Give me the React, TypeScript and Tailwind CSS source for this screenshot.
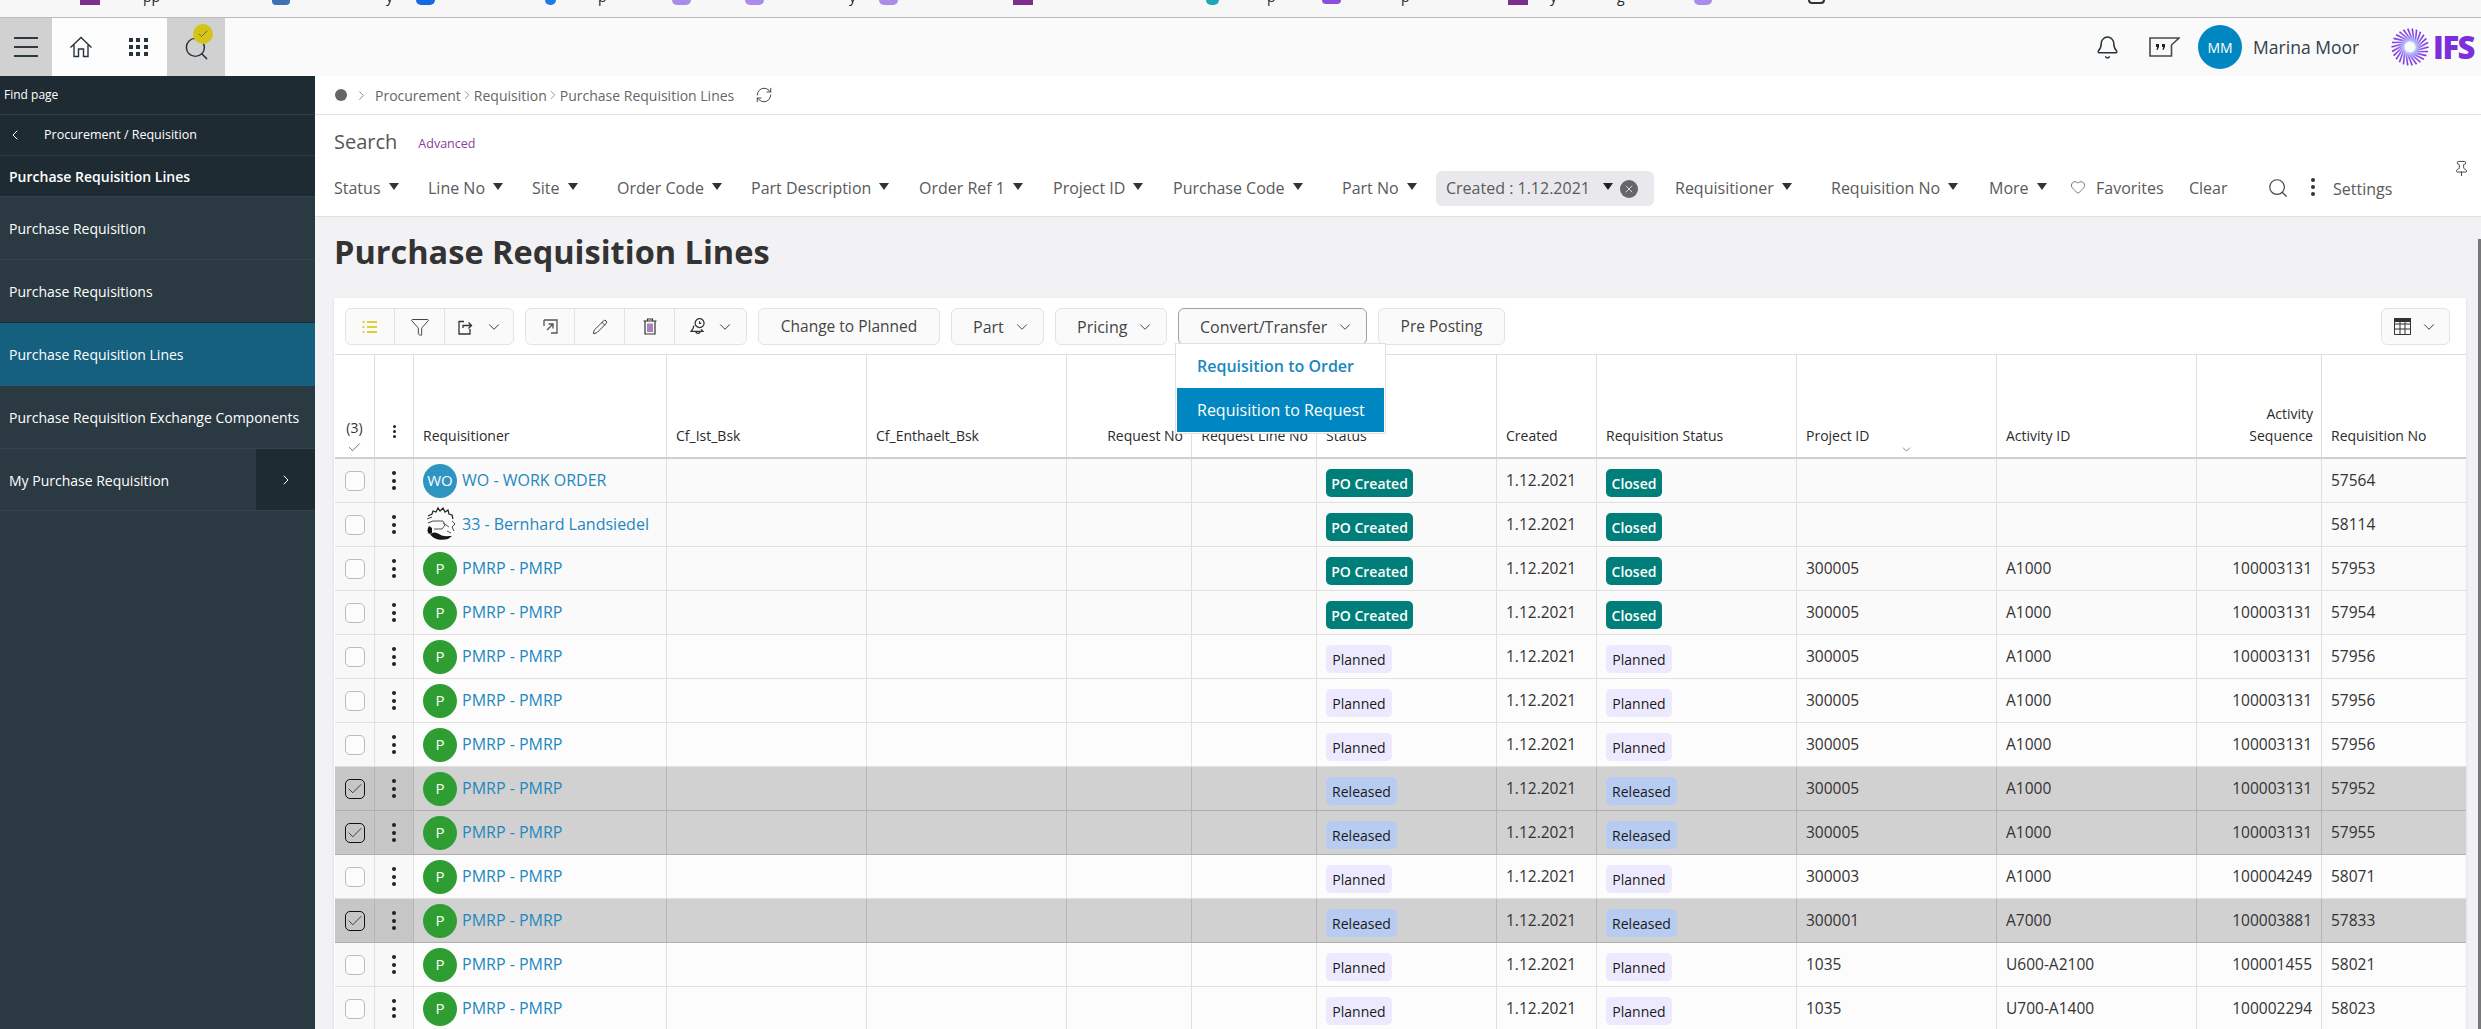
import {
  Bell,
  Check,
  ChevronDown,
  ChevronLeft,
  ChevronRight,
  Funnel,
  Heart,
  Pencil,
  Pin,
  RefreshCw,
  Search,
  X,
} from "lucide-react";

const bookmarks = [
  { cls: "ml-[80px] w-[20px] h-[5px] bg-[#7b2f8e]" },
  { cls: "ml-[43px] w-[16px]", text: "pp" },
  { cls: "ml-[113px] w-[18px] h-[5px] bg-[#3f6fb5] rounded-b-sm" },
  { cls: "ml-[96px] w-[8px]", text: "y" },
  { cls: "ml-[22px] w-[19px] h-[5px] bg-[#1769e0] rounded-b-md" },
  { cls: "ml-[110px] w-[11px] h-[5px] bg-[#1e7be6] rounded-b-full" },
  { cls: "ml-[42px] w-[8px]", text: "p" },
  { cls: "ml-[66px] w-[19px] h-[5px] bg-[#a98bec] rounded-b-full" },
  { cls: "ml-[54px] w-[19px] h-[5px] bg-[#a98bec] rounded-b-full" },
  { cls: "ml-[85px] w-[8px]", text: "y" },
  { cls: "ml-[22px] w-[19px] h-[5px] bg-[#a98bec] rounded-b-full" },
  { cls: "ml-[115px] w-[20px] h-[5px] bg-[#7b2f8e]" },
  { cls: "ml-[173px] w-[13px] h-[5px] bg-[#1fa7b5] rounded-b-full" },
  { cls: "ml-[48px] w-[8px]", text: "p" },
  { cls: "ml-[47px] w-[19px] h-[4px] bg-[#8b4fe0] rounded-b-sm" },
  { cls: "ml-[60px] w-[8px]", text: "p" },
  { cls: "ml-[99px] w-[20px] h-[5px] bg-[#7b2f8e]" },
  { cls: "ml-[22px] w-[8px]", text: "y" },
  { cls: "ml-[59px] w-[8px]", text: "g" },
  { cls: "ml-[69px] w-[18px] h-[5px] bg-[#a98bec] rounded-b-full" },
  { cls: "ml-[96px] w-[17px] h-[4px] border-x-2 border-b-2 border-[#333] rounded-b-sm" },
];

const navItems = [
  { label: "Purchase Requisition", cls: "bg-[#2b3a42] border-[#34444c]" },
  { label: "Purchase Requisitions", cls: "bg-[#2b3a42] border-[#1f2b33]" },
  { label: "Purchase Requisition Lines", cls: "bg-[#16607f] border-[#16607f]" },
  { label: "Purchase Requisition Exchange Components", cls: "bg-[#2b3a42] border-[#34444c]" },
];

const filtersLeft = [
  { label: "Status", cls: "w-[94px]" },
  { label: "Line No", cls: "w-[104px]" },
  { label: "Site", cls: "w-[85px]" },
  { label: "Order Code", cls: "w-[134px]" },
  { label: "Part Description", cls: "w-[168px]" },
  { label: "Order Ref 1", cls: "w-[134px]" },
  { label: "Project ID", cls: "w-[120px]" },
  { label: "Purchase Code", cls: "w-[169px]" },
  { label: "Part No", cls: "w-[94px]" },
];

const filtersRight = [
  { label: "Requisitioner", cls: "w-[156px]" },
  { label: "Requisition No", cls: "w-[158px]" },
  { label: "More", cls: "w-[82px]" },
];

const columns =
  "grid grid-cols-[40px_39px_253px_200px_200px_125px_125px_180px_100px_200px_200px_200px_125px_144px]";

const badgeStyles: Record<string, string> = {
  "PO Created": "w-[87px] bg-[#007f7a] text-white font-semibold",
  Closed: "w-[56px] bg-[#007f7a] text-white font-semibold",
  Planned: "w-[66px] bg-[#ede9fe] text-[#1a1a1a]",
  Released: "w-[71px] bg-[#b8cbf0] text-[#1a1a1a]",
};

const pmrp = { avatar: "P", name: "PMRP - PMRP" };

const rows = [
  { avatar: "WO", name: "WO - WORK ORDER", status: "PO Created", reqStatus: "Closed", project: "", activity: "", seq: "", no: "57564" },
  { avatar: "BL", name: "33 - Bernhard Landsiedel", status: "PO Created", reqStatus: "Closed", project: "", activity: "", seq: "", no: "58114" },
  { ...pmrp, status: "PO Created", reqStatus: "Closed", project: "300005", activity: "A1000", seq: "100003131", no: "57953" },
  { ...pmrp, status: "PO Created", reqStatus: "Closed", project: "300005", activity: "A1000", seq: "100003131", no: "57954" },
  { ...pmrp, status: "Planned", reqStatus: "Planned", project: "300005", activity: "A1000", seq: "100003131", no: "57956" },
  { ...pmrp, status: "Planned", reqStatus: "Planned", project: "300005", activity: "A1000", seq: "100003131", no: "57956" },
  { ...pmrp, status: "Planned", reqStatus: "Planned", project: "300005", activity: "A1000", seq: "100003131", no: "57956" },
  { ...pmrp, status: "Released", reqStatus: "Released", project: "300005", activity: "A1000", seq: "100003131", no: "57952" },
  { ...pmrp, status: "Released", reqStatus: "Released", project: "300005", activity: "A1000", seq: "100003131", no: "57955" },
  { ...pmrp, status: "Planned", reqStatus: "Planned", project: "300003", activity: "A1000", seq: "100004249", no: "58071" },
  { ...pmrp, status: "Released", reqStatus: "Released", project: "300001", activity: "A7000", seq: "100003881", no: "57833" },
  { ...pmrp, status: "Planned", reqStatus: "Planned", project: "1035", activity: "U600-A2100", seq: "100001455", no: "58021" },
  { ...pmrp, status: "Planned", reqStatus: "Planned", project: "1035", activity: "U700-A1400", seq: "100002294", no: "58023" },
];

const Caret = () => (
  <span className="ml-2 -mt-1 inline-block border-x-[5.5px] border-t-[7px] border-x-transparent border-t-[#333]" />
);

const Chevron = ({ cls }: { cls: string }) => (
  <ChevronDown size={18} strokeWidth={1.3} className={cls} />
);

const Burst = ({ size, cls }: { size: number; cls?: string }) => (
  <svg width={size} height={size} viewBox="-20 -20 40 40" className={cls}>
    <defs>
      <radialGradient id="burst" gradientUnits="userSpaceOnUse" cx="0" cy="0" r="20">
        <stop offset="0.25" stopColor="#bfe3ff" />
        <stop offset="0.6" stopColor="#8f5cf0" />
        <stop offset="1" stopColor="#7b2fdc" />
      </radialGradient>
    </defs>
    {Array.from({ length: 26 }).map((_, i) => {
      const a = (i / 26) * Math.PI * 2;
      return (
        <line
          key={i}
          x1={Math.cos(a + 0.75) * 6}
          y1={Math.sin(a + 0.75) * 6}
          x2={Math.cos(a) * 19.5}
          y2={Math.sin(a) * 19.5}
          stroke="url(#burst)"
          strokeWidth="1.7"
        />
      );
    })}
  </svg>
);

const Kebab = () => (
  <span className="flex flex-col gap-[3.5px]">
    <span className="w-1 h-1 rounded-full bg-[#222]" />
    <span className="w-1 h-1 rounded-full bg-[#222]" />
    <span className="w-1 h-1 rounded-full bg-[#222]" />
  </span>
);

const BernhardAvatar = () => (
  <svg width="34" height="36" viewBox="0 0 34 36" fill="none" className="shrink-0 -mt-[2px]">
    <path d="M5 10 L9 8 L10 5 L13 6 L15 2 L17 5 L20 2 L22 6 L25 4 L26 8 L29 9 L30 13" stroke="#222" strokeWidth="1.2" />
    <path d="M4 13 L9 11 M5 17 L10 15 M29 15 L32 18 L29 21 L31 25" stroke="#444" strokeWidth="1" />
    <path d="M10 15 H20 L22 19 L19 23 H11 M20 17 L26 21" stroke="#555" strokeWidth="1" />
    <path d="M6 20 C4 23 4 26 6 28 L9 27 L9 22 Z" fill="#111" />
    <path d="M7 28 C10 33 17 35 25 33 L29 30 C24 30 20 31 16 28 C13 26 10 26 7 28 Z" fill="#161616" />
    <path d="M24 25 L28 27" stroke="#555" strokeWidth="1" />
  </svg>
);

const Avatar = ({ value }: { value: string }) => {
  if (value === "BL") return <BernhardAvatar />;
  return (
    <span
      className={`w-[34px] h-[34px] shrink-0 rounded-full flex items-center justify-center text-white text-[15px] ${
        value === "WO" ? "bg-[#2e95c3]" : "bg-[#2f9e32]"
      }`}
    >
      {value}
    </span>
  );
};

const Badge = ({ value }: { value: string }) => (
  <span
    className={`mt-[10px] h-[28px] rounded-[5px] flex items-center justify-center text-[14px] ${badgeStyles[value]}`}
  >
    {value}
  </span>
);

const HeadCell = ({ children, right, cls }: { children?: React.ReactNode; right?: boolean; cls?: string }) => (
  <div
    className={`relative border-r border-[#dedede] flex flex-col justify-end pb-[10px] text-[14px] leading-[22px] text-[#2b2b2b] ${
      right ? "items-end pr-2" : "pl-[9px]"
    } ${cls ?? ""}`}
  >
    {children}
  </div>
);

const TableRow = ({ row, index }: { row: (typeof rows)[number]; index: number }) => {
  const selected = row.status === "Released";
  const line = selected ? "border-[#b5b5b5]" : "border-[#e0e0e0]";
  const cell = `border-r ${line} pl-[9px] flex items-center`;
  const rowBg = selected ? "bg-[#d1d1d1]" : index < 4 ? "bg-[#fafafa]" : "bg-[#fcfcfc]";
  const stub = selected ? "bg-[#c6c6c6]" : "bg-[#f8f8f8]";

  return (
    <div className={`${columns} h-[44px] border-b ${selected ? "border-[#b0b0b0]" : "border-[#e0e0e0]"} ${rowBg} text-[15.5px] text-[#333]`}>
      <div className={`border-r ${line} ${stub} flex items-center justify-center`}>
        <span
          className={`w-5 h-5 rounded-[5px] border flex items-center justify-center ${
            selected ? "border-[#111]" : "border-[#bbb] bg-[#fcfcfc]"
          }`}
        >
          {selected && <Check size={18} strokeWidth={1.1} className="text-[#222]" />}
        </span>
      </div>
      <div className={`border-r ${line} ${stub} flex items-center justify-center`}>
        <Kebab />
      </div>
      <div className={`${cell} pl-[7px] gap-[6px]`}>
        <Avatar value={row.avatar} />
        <span className="text-[16px] -ml-px -mt-[2px] text-[#1f87bf] whitespace-nowrap">{row.name}</span>
      </div>
      <div className={cell} />
      <div className={cell} />
      <div className={cell} />
      <div className={cell} />
      <div className={`border-r ${line} pl-[9px] flex items-start`}>
        <Badge value={row.status} />
      </div>
      <div className={cell}>1.12.2021</div>
      <div className={`border-r ${line} pl-[9px] flex items-start`}>
        <Badge value={row.reqStatus} />
      </div>
      <div className={cell}>{row.project}</div>
      <div className={cell}>{row.activity}</div>
      <div className={`border-r ${line} pr-[9px] flex items-center justify-end`}>{row.seq}</div>
      <div className="pl-[9px] flex items-center">{row.no}</div>
    </div>
  );
};

const ToolCell = ({ children, cls }: { children: React.ReactNode; cls: string }) => (
  <div className={`h-full flex items-center border-r border-[#e3e3e3] last:border-r-0 ${cls}`}>{children}</div>
);

const ToolButton = ({ label, cls, chevron }: { label: string; cls: string; chevron?: boolean }) => (
  <div
    className={`h-[37px] rounded-md border bg-[#fafafa] flex items-center text-[#444] ${
      chevron ? "pl-[21px] gap-[9px] text-[16px]" : "justify-center text-[15.5px]"
    } ${cls}`}
  >
    <span>{label}</span>
    {chevron && <Chevron cls="text-[#444]" />}
  </div>
);

export default function App() {
  return (
    <div className="relative h-[1029px] w-[2481px] overflow-hidden flex flex-col bg-white font-['Open_Sans',sans-serif]">
      <div className="h-[18px] shrink-0 overflow-hidden bg-[#f7f7f7] border-b border-[#bcbcbc] flex items-start">
        {bookmarks.map((b, i) =>
          b.text ? (
            <span key={i} className={`${b.cls} -mt-[10px] text-[14px] leading-[14px] text-[#222]`}>
              {b.text}
            </span>
          ) : (
            <span key={i} className={`shrink-0 ${b.cls}`} />
          ),
        )}
      </div>

      <header className="h-[58px] shrink-0 bg-[#fafafa] flex items-center">
        <div className="w-[52px] h-full bg-[#d1d1d1] flex flex-col items-center justify-center gap-[7px]">
          <span className="w-6 h-[2px] bg-[#2d3a40]" />
          <span className="w-6 h-[2px] bg-[#2d3a40]" />
          <span className="w-6 h-[2px] bg-[#2d3a40]" />
        </div>
        <div className="w-[115px] h-full bg-[#fdfdfd] flex items-center pl-[17px]">
          <svg width="24" height="24" viewBox="0 0 24 24" fill="none" stroke="#26343c" strokeWidth="1.4">
            <path d="M1.5 12.5 L12 2.5 L22.5 12.5 M5 10 V21.5 H9.5 V14 H14.5 V21.5 H19 V10" />
          </svg>
          <div className="ml-[36px] grid grid-cols-3 gap-[3.3px]">
            {Array.from({ length: 9 }).map((_, i) => (
              <span key={i} className="w-1 h-1 bg-[#26343c]" />
            ))}
          </div>
        </div>
        <div className="relative w-[58px] h-full bg-[#d1d1d1] flex items-center justify-center">
          <Search size={27} strokeWidth={1.3} className="text-[#26343c] mt-[2px]" />
          <span className="absolute left-[26px] top-[6px] w-[20px] h-[20px] rounded-full bg-[#d4c418] flex items-center justify-center">
            <Check size={12} strokeWidth={1.2} className="text-[#333]" />
          </span>
        </div>
        <div className="ml-auto flex items-center">
          <Bell size={25} strokeWidth={1.4} className="text-[#26343c]" />
          <svg width="31" height="20" viewBox="0 0 31 20" fill="none" className="ml-[29px]">
            <path d="M1 1 H30 L22.5 8 V19 H1 Z" stroke="#4a4a4a" strokeWidth="1.6" />
            <path d="M7 7 h3 v3 l-1.5 3 h-1 l.7 -3 h-1.2 Z M13 7 h3 v3 l-1.5 3 h-1 l.7 -3 h-1.2 Z" fill="#222" />
          </svg>
          <span className="ml-[18px] w-[44px] h-[44px] rounded-full bg-[#0087c1] flex items-center justify-center text-white text-[14px]">
            MM
          </span>
          <span className="ml-[11px] text-[17.5px] text-[#31404a] whitespace-nowrap">Marina Moor</span>
          <Burst size={38} cls="ml-[32px]" />
          <span className="ml-[4px] mr-[7px] text-[31px] leading-none font-extrabold tracking-[-1.5px] text-[#7b2fdc]">
            IFS
          </span>
        </div>
      </header>

      <div className="flex flex-1 min-h-0">
        <aside className="w-[315px] shrink-0 bg-[#2b3a42] text-white flex flex-col">
          <div className="h-[39px] bg-[#1f2b33] border-b border-[#2f3e46] pl-1 flex items-center text-[12px]">
            Find page
          </div>
          <div className="h-[41px] bg-[#1f2b33] border-b border-[#2f3e46] flex items-center text-[12.5px]">
            <ChevronLeft size={16} strokeWidth={1.5} className="ml-[7px]" />
            <span className="ml-[21px]">Procurement / Requisition</span>
          </div>
          <div className="h-[41px] bg-[#1f2b33] border-b border-[#34444c] pl-[9px] flex items-center text-[14px] font-semibold">
            Purchase Requisition Lines
          </div>
          {navItems.map((item) => (
            <div key={item.label} className={`h-[63px] border-b pl-[9px] flex items-center text-[14px] ${item.cls}`}>
              {item.label}
            </div>
          ))}
          <div className="h-[62px] border-b border-[#34444c] flex items-center text-[14px]">
            <span className="pl-[9px] flex-1 mt-[2px]">My Purchase Requisition</span>
            <span className="w-[59px] h-full bg-[#1f2b33] flex items-center justify-center">
              <ChevronRight size={16} strokeWidth={1.5} />
            </span>
          </div>
        </aside>

        <main className="relative flex-1 min-w-0 flex flex-col">
          <div className="h-[39px] shrink-0 border-b border-[#e0e0e0] flex items-center pl-[20px] text-[14px] text-[#666]">
            <span className="w-3 h-3 rounded-full bg-[#666]" />
            <ChevronRight size={15} strokeWidth={1.2} className="ml-[7px]" />
            <span className="ml-[6px]">Procurement</span>
            <ChevronRight size={14} strokeWidth={1.2} className="mx-[-0.5px]" />
            <span>Requisition</span>
            <ChevronRight size={14} strokeWidth={1.2} className="mx-[-0.5px]" />
            <span>Purchase Requisition Lines</span>
            <RefreshCw size={18} strokeWidth={1.3} className="ml-[21px] text-[#444]" />
          </div>

          <div className="relative h-[102px] shrink-0 border-b border-[#e0e0e0] pl-[19px] pt-[13px]">
            <div className="flex items-center h-[28px]">
              <span className="text-[20px] text-[#555]">Search</span>
              <span className="ml-[21px] mt-[4px] text-[12.5px] text-[#8a3d9e]">Advanced</span>
            </div>
            <div className="mt-[15px] h-[35px] flex items-center text-[16px] text-[#5a5a5a] whitespace-nowrap">
              {filtersLeft.map((f) => (
                <span key={f.label} className={`flex items-center ${f.cls}`}>
                  <span className="-mt-[2px]">{f.label}</span>
                  <Caret />
                </span>
              ))}
              <span className="w-[218px] h-[35px] rounded-md bg-[#e9e9ed] pl-[10px] flex items-center">
                <span className="-mt-[2px]">Created : 1.12.2021</span>
                <span className="ml-[13px] -mt-1 border-x-[5.5px] border-t-[7px] border-x-transparent border-t-[#222]" />
                <span className="ml-[7px] w-[18px] h-[18px] rounded-full bg-[#666] flex items-center justify-center">
                  <X size={12} strokeWidth={1.5} className="text-white" />
                </span>
              </span>
              <span className="ml-[21px] flex items-center">
                {filtersRight.map((f) => (
                  <span key={f.label} className={`flex items-center ${f.cls}`}>
                    <span className="-mt-[2px]">{f.label}</span>
                    <Caret />
                  </span>
                ))}
              </span>
              <Heart size={16} strokeWidth={1.2} className="-mt-1 -ml-px" />
              <span className="ml-[10px] w-[93px] -mt-[2px]">Favorites</span>
              <span className="w-[80px] -mt-[2px]">Clear</span>
              <Search size={22} strokeWidth={1.3} className="text-[#444] -mt-[2px] -ml-[2px]" />
              <span className="ml-[22px] flex flex-col gap-[3px] -mt-1">
                <span className="w-1 h-1 rounded-full bg-[#333]" />
                <span className="w-1 h-1 rounded-full bg-[#333]" />
                <span className="w-1 h-1 rounded-full bg-[#333]" />
              </span>
              <span className="ml-[18px]">Settings</span>
            </div>
            <Pin size={17} strokeWidth={1.3} className="absolute right-[11px] top-[45px] text-[#333]" />
          </div>

          <div className="flex-1 min-h-0 bg-[#f2f1f4] pl-[19px] overflow-hidden">
            <h1 className="mt-[13px] h-[68px] text-[32.5px] leading-[44px] font-bold text-[#333]">
              Purchase Requisition Lines
            </h1>
            <div className="relative w-[2132px] bg-white pl-px shadow-sm">
              <div className="h-[57px] border-b border-[#dedede] pl-[10px] pt-[10px] pr-[16px] flex items-start">
                <div className="h-[37px] w-[169px] rounded-md border border-[#e3e3e3] bg-[#fafafa] flex items-center">
                  <ToolCell cls="w-[49px] justify-center">
                    <svg width="16" height="14" viewBox="0 0 16 14" fill="none" stroke="#d9bd00" strokeWidth="1.5">
                      <path d="M5 2 H15 M5 7 H15 M5 12 H15 M0.5 2 H2.5 M0.5 7 H2.5 M0.5 12 H2.5" />
                    </svg>
                  </ToolCell>
                  <ToolCell cls="w-[50px] justify-center">
                    <Funnel size={20} strokeWidth={1.2} className="text-[#444]" />
                  </ToolCell>
                  <ToolCell cls="flex-1 pl-[13px] gap-[12px]">
                    <svg width="15" height="16" viewBox="0 0 15 16" fill="none" stroke="#333" strokeWidth="1.3">
                      <path d="M6 2.5 H1 V15 H12 V10 M5 9 V6.5 H13 M10.5 3.5 L13.5 6.5 L10.5 9.5" />
                    </svg>
                    <Chevron cls="text-[#333]" />
                  </ToolCell>
                </div>
                <div className="ml-[11px] h-[37px] w-[222px] rounded-md border border-[#e3e3e3] bg-[#fafafa] flex items-center">
                  <ToolCell cls="w-[49px] justify-center">
                    <svg width="15" height="15" viewBox="0 0 15 15" fill="none" stroke="#555" strokeWidth="1.3">
                      <path d="M1 1 H14 V14 H8 M1 1 V7 M4 11 L10 5 M5.5 5 H10 V9.5" />
                    </svg>
                  </ToolCell>
                  <ToolCell cls="w-[50px] justify-center">
                    <Pencil size={16} strokeWidth={1.4} className="text-[#333]" />
                  </ToolCell>
                  <ToolCell cls="w-[50px] justify-center">
                    <svg width="14" height="17" viewBox="0 0 14 17" fill="none" stroke="#333" strokeWidth="1.2">
                      <path d="M0.5 3 H13.5 M4.5 3 V1 H9.5 V3 M2 3 V16 H12 V3" />
                      <path d="M5 5.5 V14 M7 5.5 V14 M9 5.5 V14" stroke="#7b2f8e" />
                    </svg>
                  </ToolCell>
                  <ToolCell cls="flex-1 pl-[15px] gap-[10px]">
                    <svg width="16" height="17" viewBox="0 0 15 16" fill="none" stroke="#333" strokeWidth="1.2">
                      <path d="M3.5 7 C3.5 10 2 11 1 12.5 H12 C11.5 12 11 11.4 10.6 10.5 M5.5 12.5 a2 2 0 0 0 4 0" />
                      <circle cx="9" cy="4.8" r="4.2" />
                      <path d="M9 3 V5 H10.5" />
                    </svg>
                    <Chevron cls="text-[#333]" />
                  </ToolCell>
                </div>
                <ToolButton label="Change to Planned" cls="ml-[11px] w-[182px] border-[#e3e3e3]" />
                <ToolButton label="Part" chevron cls="ml-[11px] w-[93px] border-[#e3e3e3]" />
                <ToolButton label="Pricing" chevron cls="ml-[11px] w-[112px] border-[#e3e3e3]" />
                <ToolButton label="Convert/Transfer" chevron cls="ml-[11px] w-[189px] border-[#a0a0a0]" />
                <ToolButton label="Pre Posting" cls="ml-[11px] w-[127px] border-[#e3e3e3]" />
                <div className="ml-auto h-[37px] w-[69px] rounded-md border border-[#e3e3e3] bg-[#fafafa] flex items-center pl-[12px] gap-[9px]">
                  <svg width="17" height="17" viewBox="0 0 17 17" fill="none" stroke="#333" strokeWidth="1">
                    <path d="M0.5 0.5 H16.5 V16.5 H0.5 Z M0.5 6 H16.5 M0.5 11 H16.5 M6 3 V16.5 M11 3 V16.5" />
                    <rect x="0.5" y="0.5" width="16" height="3" fill="#333" />
                  </svg>
                  <Chevron cls="text-[#333]" />
                </div>
              </div>

              <div className={`${columns} h-[104px] border-b-2 border-[#cfcfcf] bg-white`}>
                <div className="border-r border-[#dedede] flex flex-col items-center justify-end pb-[2px] text-[14px] text-[#333]">
                  <span>(3)</span>
                  <Check size={15} strokeWidth={1.1} className="mt-[2px] text-[#333]" />
                </div>
                <div className="border-r border-[#dedede] flex flex-col items-center justify-end gap-[2px] pb-[19px]">
                  <span className="w-[3px] h-[3px] rounded-full bg-[#222]" />
                  <span className="w-[3px] h-[3px] rounded-full bg-[#222]" />
                  <span className="w-[3px] h-[3px] rounded-full bg-[#222]" />
                </div>
                <HeadCell cls="pl-[8px]">Requisitioner</HeadCell>
                <HeadCell>Cf_Ist_Bsk</HeadCell>
                <HeadCell>Cf_Enthaelt_Bsk</HeadCell>
                <HeadCell right>Request No</HeadCell>
                <HeadCell right>Request Line No</HeadCell>
                <HeadCell>Status</HeadCell>
                <HeadCell>Created</HeadCell>
                <HeadCell>Requisition Status</HeadCell>
                <HeadCell>
                  Project ID
                  <ChevronDown size={13} strokeWidth={1.2} className="absolute left-[103px] bottom-[1px] text-[#444]" />
                </HeadCell>
                <HeadCell>Activity ID</HeadCell>
                <HeadCell right>
                  <span>Activity</span>
                  <span>Sequence</span>
                </HeadCell>
                <div className="flex flex-col justify-end pb-[10px] pl-[9px] text-[14px] leading-[22px] text-[#2b2b2b]">
                  Requisition No
                </div>
              </div>

              {rows.map((row, i) => (
                <TableRow key={i} row={row} index={i} />
              ))}

              <div className="absolute left-[841px] top-[45px] w-[211px] h-[91px] bg-white border border-[#e0e0e0] px-px pb-px flex flex-col text-[16px]">
                <div className="h-[45px] flex items-center pl-[20px] font-semibold text-[#1a87bf]">
                  Requisition to Order
                </div>
                <div className="h-[45px] flex items-center pl-[20px] bg-[#0087c1] text-white">
                  Requisition to Request
                </div>
              </div>
            </div>
          </div>

          <div className="absolute right-0 top-[163px] bottom-0 w-[3px] bg-[#777]" />
        </main>
      </div>
    </div>
  );
}
